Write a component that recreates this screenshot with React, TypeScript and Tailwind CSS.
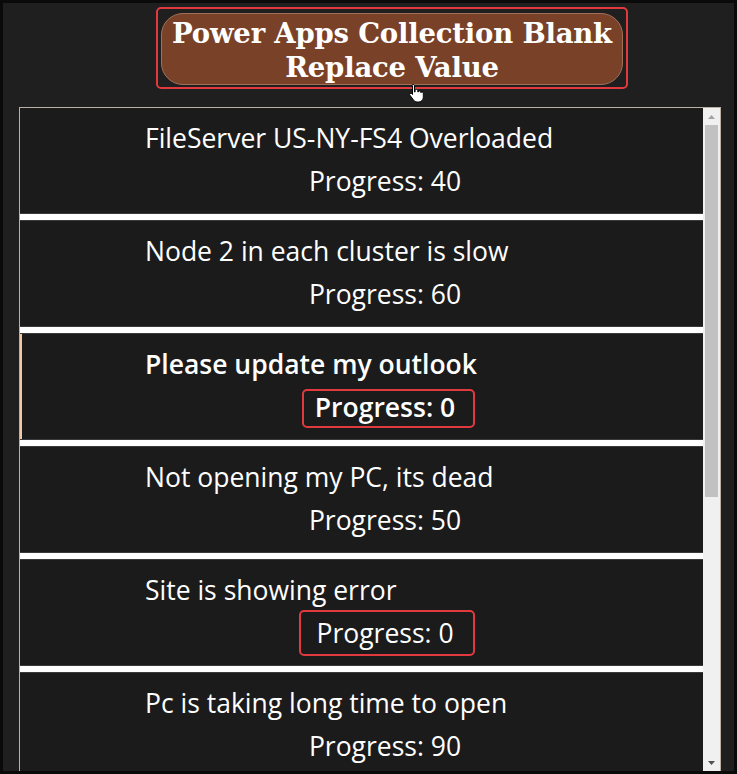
import React from 'react';

interface Ticket {
  title: string;
  progress: number;
}

const TICKETS: Ticket[] = [
  { title: 'FileServer US-NY-FS4 Overloaded', progress: 40 },
  { title: 'Node 2 in each cluster is slow', progress: 60 },
  { title: 'Please update my outlook', progress: 0 },
  { title: 'Not opening my PC, its dead', progress: 50 },
  { title: 'Site is showing error', progress: 0 },
  { title: 'Pc is taking long time to open', progress: 90 },
];

const SELECTED = 2;

// red annotation boxes drawn over the gallery
const HIGHLIGHTS: Record<number, string> = {
  2: 'left-[280px] top-[55px] w-[173px] h-[39px]',
  4: 'left-[279px] top-[50px] w-[176px] h-[46px]',
};

const HandCursor: React.FC = () => (
  <svg width="14" height="20" viewBox="0 0 14 20" className="absolute left-[406px] top-[80px]">
    <path
      d="M4 1.5c.8 0 1.5.6 1.5 1.4V9l.6-.1V7.6c0-.8.6-1.3 1.4-1.3s1.3.5 1.3 1.3v1.3l.5.1c.1-.7.6-1.1 1.3-1.1s1.3.5 1.3 1.2v.6c.2-.5.6-.8 1.2-.8.7 0 1.2.5 1.2 1.2v4.3c0 2.6-2 4.6-4.6 4.6H8.1c-1.4 0-2.6-.6-3.4-1.7L1 12.3c-.5-.6-.4-1.4.2-1.8.6-.4 1.3-.3 1.7.2l.6.8V2.9C2.5 2.1 3.2 1.5 4 1.5z"
      fill="#ffffff"
      stroke="#000000"
      strokeWidth="1"
    />
  </svg>
);

const App: React.FC = () => {
  return (
    <div className="relative w-[737px] h-[774px] overflow-hidden bg-[#1f1f1f] border-[3px] border-[#0a0a0a] font-['Open_Sans',sans-serif]">
      {/* Title button */}
      <div className="mt-[4px] ml-[153px] w-[472px] h-[82px] border-2 border-[#e0393e] rounded-[5px] p-[3px] pt-[4px]">
        <div className="h-[72px] rounded-[22px] bg-[#7a4129] border border-[#a0705a] flex items-center justify-center">
          <h1 className="pt-[2px] text-center text-white font-bold text-[27.5px] leading-[34px] tracking-[-0.2px] font-['DejaVu_Serif',serif]">
            Power Apps Collection Blank
            <br />
            Replace Value
          </h1>
        </div>
      </div>
      <HandCursor />

      {/* Gallery */}
      <div className="mt-[18px] ml-[16px] w-[702px] h-[700px] border border-[#bcb0a4] flex">
        <div className="flex-1 flex flex-col">
          {TICKETS.map((t, i) => (
            <React.Fragment key={i}>
              <div
                className={
                  'relative shrink-0 h-[105px] bg-[#1b1b1b] text-white ' +
                  (i === SELECTED ? 'border-l-2 border-[#f2cba6] pl-[123px] font-semibold' : 'pl-[125px]')
                }
              >
                <div className="pt-[13px] text-[26.5px] leading-[34px]">{t.title}</div>
                <div className="mt-[9px] ml-[140px] w-[200px] text-center text-[26.5px] leading-[34px]">
                  Progress: {t.progress}
                </div>
                {HIGHLIGHTS[i] && (
                  <div className={'absolute border-2 border-[#e0393e] rounded-[5px] ' + HIGHLIGHTS[i]} />
                )}
              </div>
              {i < TICKETS.length - 1 && (
                <div className="shrink-0 h-[8px] bg-white border-y border-[#3a3a3a]" />
              )}
            </React.Fragment>
          ))}
        </div>

        {/* Scrollbar */}
        <div className="w-[17px] h-[663px] bg-[#f0f0f0] flex flex-col items-center">
          <div className="h-[17px] w-full flex items-center justify-center">
            <svg width="7" height="4" viewBox="0 0 7 4">
              <path d="M0 4 L3.5 0 L7 4 Z" fill="#a3a3a3" />
            </svg>
          </div>
          <div className="w-[13px] h-[372px] bg-[#c1c1c1]" />
          <div className="flex-1" />
          <div className="h-[17px] w-full flex items-center justify-center">
            <svg width="7" height="4" viewBox="0 0 7 4">
              <path d="M0 0 L7 0 L3.5 4 Z" fill="#505050" />
            </svg>
          </div>
        </div>
      </div>
    </div>
  );
};

export default App;
